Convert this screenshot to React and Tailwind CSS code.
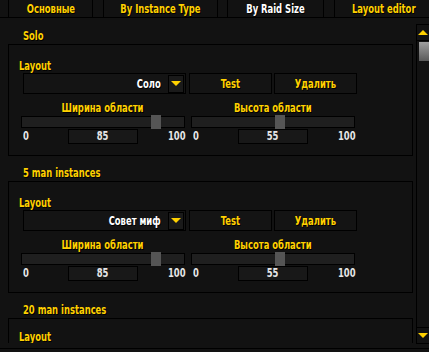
const font = { fontFamily: '"DejaVu Sans Condensed", "Liberation Sans", sans-serif' };

function T({ children, left, className = "" }) {
  return (
    <span className={`inline-block whitespace-nowrap scale-x-[0.78] ${left ? "origin-left" : ""} ${className}`}>
      {children}
    </span>
  );
}

const tabs = [
  { label: "Основные", w: "w-[85px]", ml: "ml-[8px]", active: false },
  { label: "By Instance Type", w: "w-[115px]", ml: "ml-[10px]", active: false },
  { label: "By Raid Size", w: "w-[97px]", ml: "ml-[9px]", active: true },
  { label: "Layout editor", w: "w-[100px]", ml: "ml-[10px]", active: false },
];

const sections = [
  { title: "Solo", layout: "Соло" },
  { title: "5 man instances", layout: "Совет миф" },
];

const gold = "text-[#ffd100] font-bold [text-shadow:1px_1px_0_#000]";

function Slider({ label, value }) {
  return (
    <div className="w-[164px] flex flex-col">
      <div className={`h-[12px] text-center leading-[12px] text-[12px] ${gold}`}>
        <T>{label}</T>
      </div>
      <div className="relative h-[12px] mt-[2px] bg-[#1f1f1f] border border-black">
        <div
          className="absolute top-[-2px] w-[10px] h-[14px] bg-[#555]"
          style={{ left: `${(value / 100) * 153 - 1}px` }}
        />
      </div>
      <div className="flex items-center justify-between h-[16px] px-[2px] text-[#e6e6e6] text-[12px] font-bold">
        <span className="w-[20px]"><T left>0</T></span>
        <div className="w-[70px] h-[15px] bg-[#181818] border border-black text-center leading-[13px]"><T>{value}</T></div>
        <span className="w-[20px] text-right"><T className="origin-right">100</T></span>
      </div>
    </div>
  );
}

function Group({ layout }) {
  return (
    <div className="ml-[8px] w-[405px] h-[112px] shrink-0 border border-black pt-[15px]">
      <div className={`ml-[10px] h-[12px] leading-[12px] text-[12px] ${gold}`}>
        <T left>Layout</T>
      </div>
      <div className="flex mt-[1px] h-[21px]">
        <div className="ml-[14px] w-[163px] h-[21px] border border-black bg-[#141414] flex items-center justify-end">
          <span className="text-white font-bold text-[12px] mr-[7px] [text-shadow:1px_1px_0_#000]">
            <T className="origin-right">{layout}</T>
          </span>
          <div className="w-[16px] h-[18px] mr-[1px] border border-black bg-[#1a1a1a] flex items-center justify-center">
            <svg width="10" height="5" viewBox="0 0 10 5">
              <path d="M0 0 L10 0 L5 5 Z" fill="#ffd100" />
            </svg>
          </div>
        </div>
        <button className={`ml-[3px] w-[83px] h-[21px] border border-black bg-[#141414] text-[12px] ${gold}`}>
          <T>Test</T>
        </button>
        <button className={`ml-[2px] w-[83px] h-[21px] border border-black bg-[#141414] text-[12px] ${gold}`}>
          <T>Удалить</T>
        </button>
      </div>
      <div className="flex mt-[8px] ml-[12px] gap-[6px]">
        <Slider label="Ширина области" value={85} />
        <Slider label="Высота области" value={55} />
      </div>
    </div>
  );
}

function Title({ children, first }) {
  return (
    <div className={`${first ? "mt-[10px]" : "mt-[9px]"} ml-[23px] h-[16px] leading-[16px] text-[12px] ${gold}`}>
      <T left>{children}</T>
    </div>
  );
}

export default function App() {
  return (
    <div className="w-[429px] h-[352px] bg-[#121212] flex flex-col overflow-hidden" style={font}>
      <div className="flex h-[18px] shrink-0 border-b border-black">
        {tabs.map((t) => (
          <div
            key={t.label}
            className={`${t.w} ${t.ml} shrink-0 h-full border-x border-black flex items-center justify-center text-[12px] font-bold [text-shadow:1px_1px_0_#000] ${
              t.active ? "text-white" : "text-[#ffd100]"
            }`}
          >
            <T>{t.label}</T>
          </div>
        ))}
      </div>
      <div className="flex h-[331px] shrink-0 border-b border-black">
        <div className="w-[416px] h-[325px] overflow-hidden flex flex-col">
          {sections.map((s, i) => (
            <div key={i} className="flex flex-col shrink-0">
              <Title first={i === 0}>{s.title}</Title>
              <Group layout={s.layout} />
            </div>
          ))}
          <Title>20 man instances</Title>
          <div className="ml-[8px] w-[405px] flex-1 border border-b-0 border-black pt-[13px]">
            <div className={`ml-[10px] h-[11px] leading-[11px] text-[12px] ${gold}`}>
              <T left>Layout</T>
            </div>
          </div>
        </div>
        <div className="w-[13px] flex flex-col pt-[6px]">
          <div className="h-[17px] border border-black border-r-0 bg-[#121212] flex items-center justify-center">
            <svg width="10" height="5" viewBox="0 0 10 5">
              <path d="M0 5 L10 5 L5 0 Z" fill="#ffd100" />
            </svg>
          </div>
          <div className="h-[286px] border-l border-black relative">
            <div className="absolute top-[1px] left-[2px] w-[11px] h-[19px] bg-gradient-to-b from-[#a0a0a0] to-[#5a5a5a]" />
          </div>
          <div className="h-[17px] border border-black border-r-0 bg-[#121212] flex items-center justify-center">
            <svg width="10" height="5" viewBox="0 0 10 5">
              <path d="M0 0 L10 0 L5 5 Z" fill="#ffd100" />
            </svg>
          </div>
        </div>
      </div>
    </div>
  );
}
